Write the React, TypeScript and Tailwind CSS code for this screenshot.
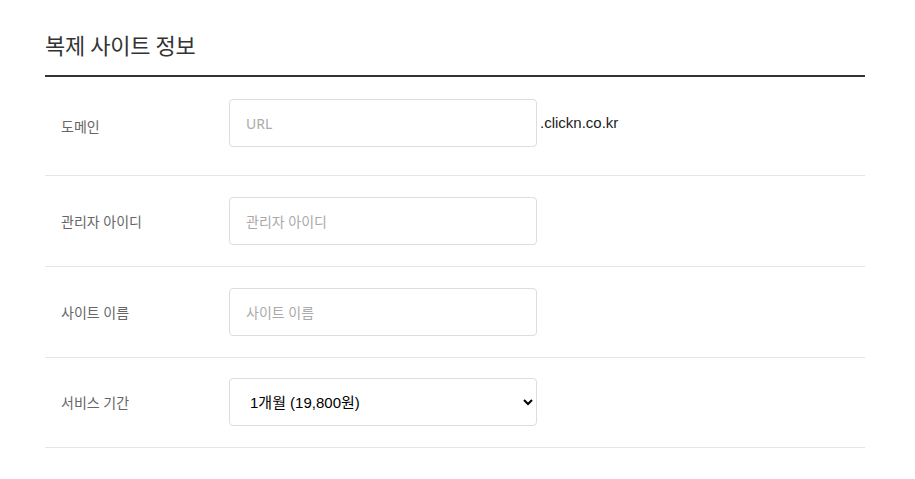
import React, { useState } from 'react';

const rows = [
    { label: '도메인', placeholder: 'URL', suffix: '.clickn.co.kr' },
    { label: '관리자 아이디', placeholder: '관리자 아이디' },
    { label: '사이트 이름', placeholder: '사이트 이름' },
];

export default function App() {
    const [period, setPeriod] = useState('1');

    return (
        <div className="bg-white min-h-screen font-['Noto_Sans','Noto_Sans_CJK_KR',sans-serif] text-[#333]">
            <div className="ml-[45px] mr-[50px] pt-[28px]">
                <h2 className="text-[22px] leading-[34px] pb-[13px] border-b-2 border-[#333] tracking-[-0.3px]">복제 사이트 정보</h2>

                {rows.map((row, i) => (
                    <div key={row.label} className={`flex items-center border-b border-[#e5e5e5] ${i === 0 ? 'pt-[22px] pb-[28px]' : 'py-[21px]'}`}>
                        <div className={`w-[184px] pl-4 text-[14px] text-[#666] ${i === 0 ? 'pt-[7px]' : ''}`}>{row.label}</div>
                        <input
                            type="text"
                            placeholder={row.placeholder}
                            className="w-[308px] h-[48px] px-4 border border-[#ddd] rounded-[4px] text-[14px] placeholder:text-[#aaa] outline-none"
                        />
                        {row.suffix && (
                            <span className="ml-[3px] text-[15px] text-[#222] font-['Liberation_Sans','Noto_Sans_CJK_KR',sans-serif]">{row.suffix}</span>
                        )}
                    </div>
                ))}

                <div className="flex items-center border-b border-[#e5e5e5] pt-[20px] pb-[21px]">
                    <div className="w-[184px] pl-4 text-[14px] text-[#666]">서비스 기간</div>
                    <select
                        value={period}
                        onChange={e => setPeriod(e.target.value)}
                        className="w-[308px] h-[48px] pl-4 pr-2 border border-[#ddd] rounded-[4px] text-[15px] text-black bg-white outline-none font-['Liberation_Sans','Noto_Sans_CJK_KR',sans-serif]"
                    >
                        <option value="1">1개월 (19,800원)</option>
                        <option value="3">3개월 (59,400원)</option>
                        <option value="6">6개월 (118,800원)</option>
                        <option value="12">12개월 (237,600원)</option>
                    </select>
                </div>
            </div>
        </div>
    );
}
